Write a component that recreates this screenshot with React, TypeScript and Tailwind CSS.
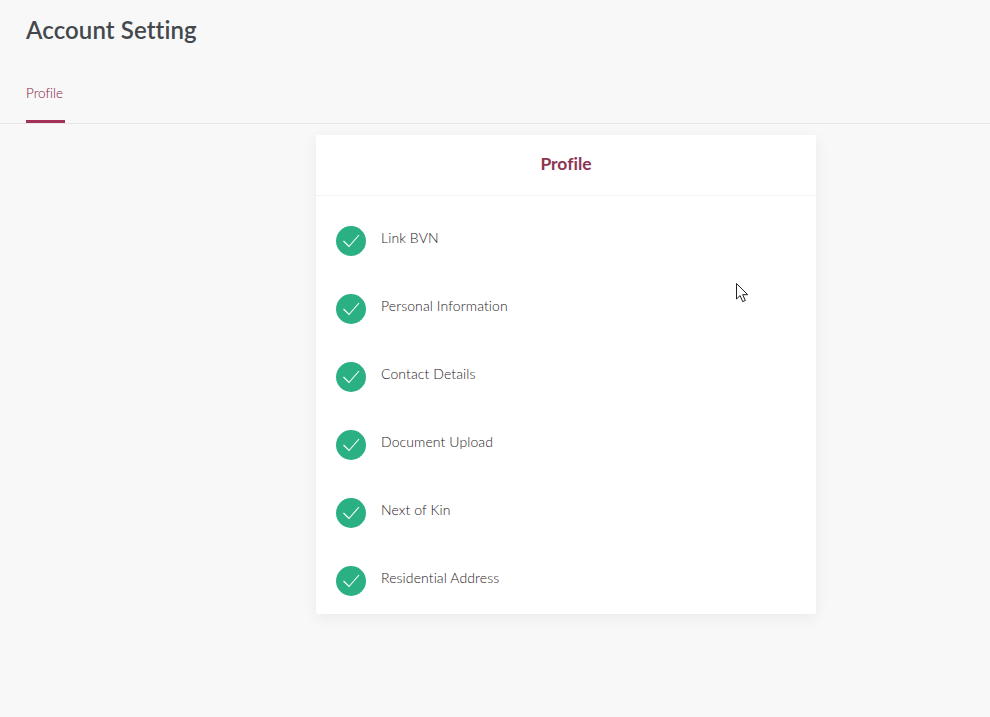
import React from "react";

const items = [
  "Link BVN",
  "Personal Information",
  "Contact Details",
  "Document Upload",
  "Next of Kin",
  "Residential Address",
];

const CheckBadge = () => (
  <span className="flex h-[30px] w-[30px] shrink-0 items-center justify-center rounded-full bg-[#2bb083]">
    <svg width="30" height="30" viewBox="0 0 30 30" fill="none">
      <path d="M7.5 15l5.5 5.5L23 9" stroke="#fff" strokeWidth="1.1" />
    </svg>
  </span>
);

const Cursor = () => (
  <svg className="absolute left-[735px] top-[282px]" width="16" height="22" viewBox="0 0 16 22" fill="none">
    <path
      d="M1.5 1.5v15.5l3.6-3.4 2.6 6 2.6-1.1-2.6-5.8h5z"
      fill="#fff"
      stroke="#222"
      strokeWidth="1"
    />
  </svg>
);

export default function App() {
  return (
    <div className="relative h-[717px] w-[990px] overflow-hidden bg-[#f8f8f8] font-['Lato',sans-serif] [font-variant-ligatures:none]">
      {/* Header */}
      <div className="px-[26px] pt-[15px]">
        <h1 className="text-[24px] leading-[30px] font-semibold tracking-[0.1px] text-[#43484d]">Account Setting</h1>
      </div>

      {/* Tabs */}
      <div className="mt-[38px] h-[41px] border-b border-[#e6e6e6] px-[26px]">
        <div className="relative h-[41px] w-[39px]">
          <span className="block text-[13.5px] leading-[20px] font-light text-[#7f2040]">Profile</span>
          <div className="absolute bottom-[1px] left-0 h-[3px] w-full bg-[#a23357]" />
        </div>
      </div>

      {/* Card */}
      <div className="mx-auto mt-[11px] w-[500px] translate-x-[71px] rounded-[2px] bg-white pb-[18px] shadow-[0_4px_16px_rgba(0,0,0,0.06)]">
        <div className="flex h-[61px] items-center justify-center border-b border-[#f3f3f3] pb-[2px]">
          <h2 className="text-[17.5px] font-bold text-[#8d3552]">Profile</h2>
        </div>
        <div className="flex flex-col gap-[38px] px-5 pt-[30px]">
          {items.map((it) => (
            <div key={it} className="flex h-[30px] items-center gap-[15px]">
              <CheckBadge />
              <span className="-translate-y-[4px] text-[14px] font-light tracking-[0.1px] text-[#1f2124]">{it}</span>
            </div>
          ))}
        </div>
      </div>

      <Cursor />
    </div>
  );
}
